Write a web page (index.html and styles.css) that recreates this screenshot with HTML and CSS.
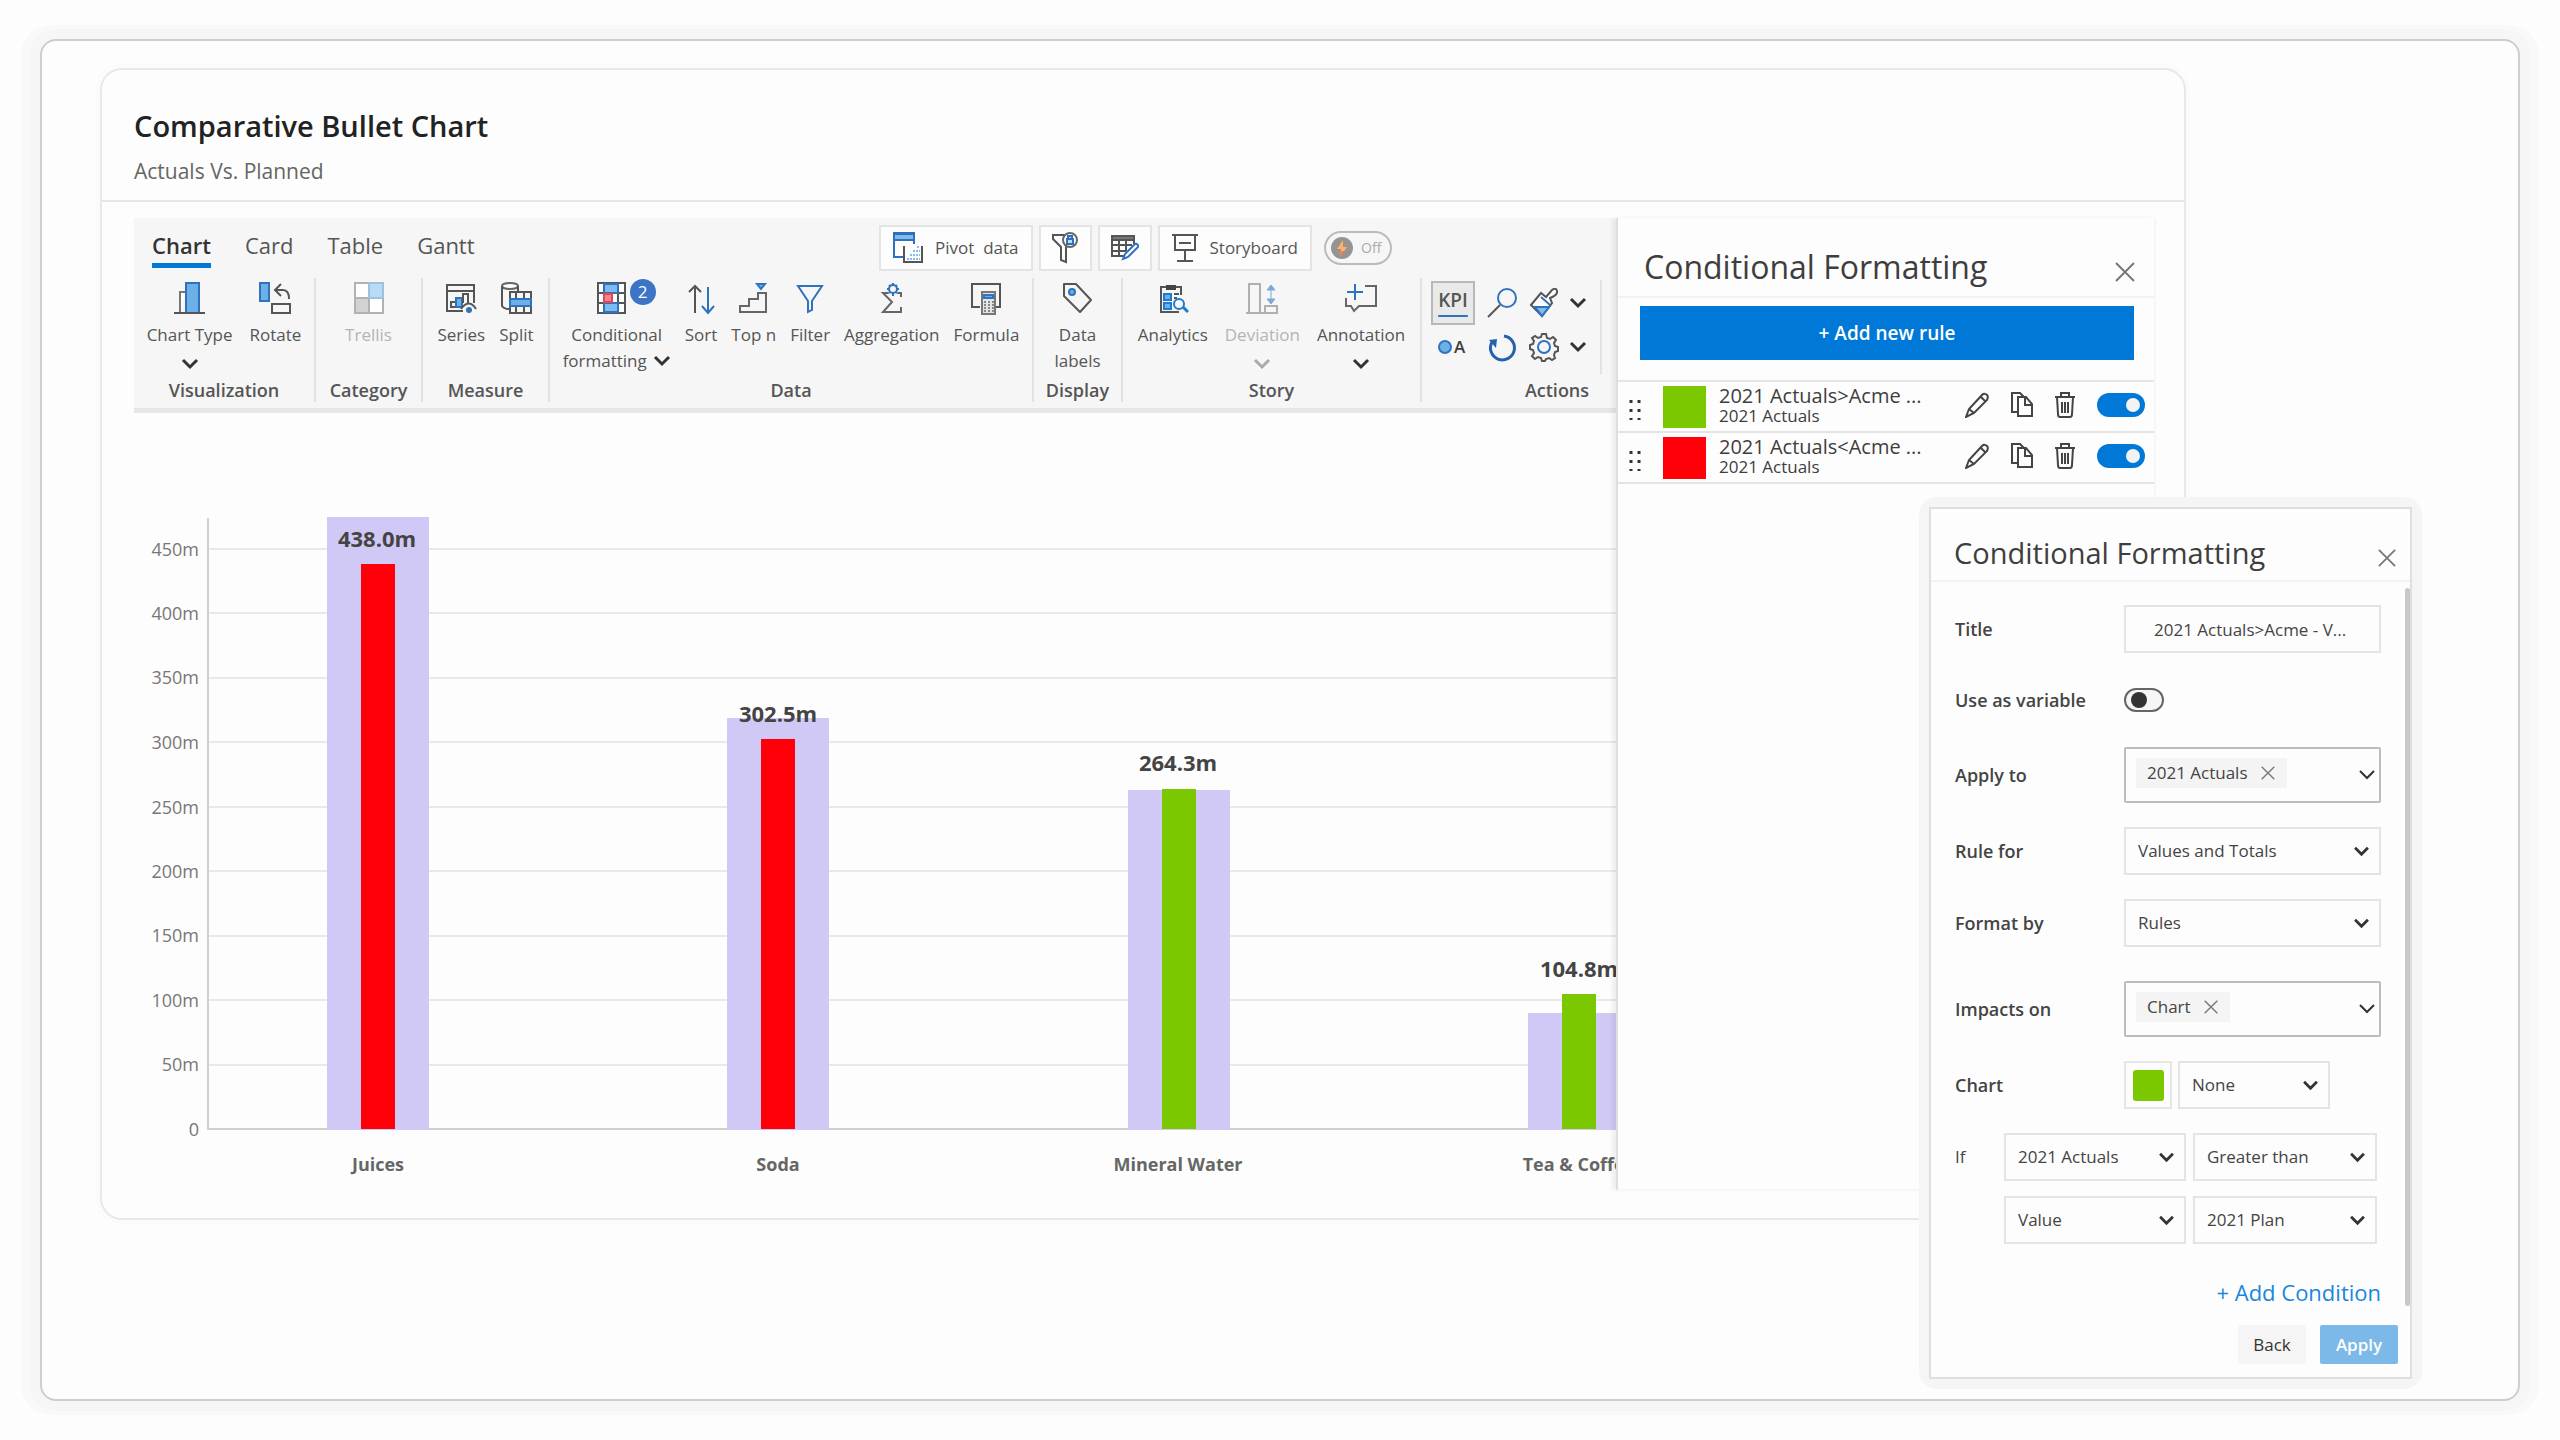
FILE: index.html
```html
<!DOCTYPE html>
<html lang="en">
<head>
<meta charset="utf-8">
<title>Comparative Bullet Chart</title>
<meta name="viewport" content="width=device-width, initial-scale=1">
<link rel="stylesheet" href="styles.css">
</head>
<body>
<svg class="defs" aria-hidden="true">
  <symbol id="chevron" viewBox="0 0 18 12"><path d="M2 2l7 7 7-7" fill="none" stroke="currentColor" stroke-width="3"/></symbol>
  <symbol id="close" viewBox="0 0 20 20"><path d="M1 1l18 18M19 1L1 19" fill="none" stroke="currentColor" stroke-width="2"/></symbol>
  <symbol id="pencil" viewBox="0 0 24 26"><path d="M1 25l3-8L17 3c2-2 4-1 5 0s1 3 0 5L9 21zM16 5l4 4M4 17l5 4" fill="none" stroke="currentColor" stroke-width="2"/></symbol>
  <symbol id="copy" viewBox="0 0 22 26"><path d="M7 20H1V1h8l4 4M7 5h8l6 7v12H7zM14 5v8h7" fill="none" stroke="currentColor" stroke-width="2"/></symbol>
  <symbol id="trash" viewBox="0 0 20 26"><path d="M0 5h20M6 5V1h8v4M2 5l1 17c0 2 1 3 2 3h10c1 0 2-1 2-3l1-17M7 10v11M10 10v11M13 10v11" fill="none" stroke="currentColor" stroke-width="2"/></symbol>
</svg>
<main class="frame">
  <section class="card">
    <header class="card-header">
      <h1>Comparative Bullet Chart</h1>
      <p>Actuals Vs. Planned</p>
    </header>
    <div class="visual">
      <div class="report">
        <div class="ribbon">
          <div class="ribbon-top">
            <nav class="tabs">
              <button class="tab active">Chart</button>
              <button class="tab">Card</button>
              <button class="tab">Table</button>
              <button class="tab">Gantt</button>
            </nav>
            <div class="quick">
              <button class="box wide">
                <svg width="30" height="32" viewBox="0 0 30 32"><path d="M10 25H1V1h20v11" fill="none" stroke="#2f6fbe" stroke-width="2"/><path d="M1 2h20v6H1z" fill="#7fbcec" stroke="#2f6fbe" stroke-width="2"/><path d="M11 14v16h18V14" fill="none" stroke="#555" stroke-width="2"/><path d="M14 27h13M17 23h10M20 19h7M24 15h3" stroke="#7fc0ee" stroke-width="2" stroke-dasharray="2 1"/></svg>
                <span>Pivot &nbsp;data</span>
              </button>
              <button class="box" aria-label="Filter lock">
                <svg width="27" height="32" viewBox="0 0 27 32"><path d="M13 3H1v4l8 8v13l5 2V15l3-2" fill="none" stroke="#555" stroke-width="2"/><circle cx="18" cy="8" r="7" fill="#fff" stroke="#666" stroke-width="2"/><path d="M15 7h6v5h-6zM16 7V4h4v3" fill="#bcdcf7" stroke="#2f6fbe" stroke-width="2"/></svg>
              </button>
              <button class="box" aria-label="Edit table">
                <svg width="28" height="28" viewBox="0 0 28 28"><path d="M1 2h22v4H1z" fill="#777" stroke="#555" stroke-width="2"/><path d="M1 2v20h12M1 11h20M1 17h14M8 6v16M15 6v11M23 6v4" fill="none" stroke="#555" stroke-width="2"/><path d="M12 25l2-5 10-10c1-1 4 1 3 3L17 23z" fill="#fff" stroke="#2f6fbe" stroke-width="2"/></svg>
              </button>
              <button class="box wide">
                <svg class="raise" width="26" height="30" viewBox="0 0 26 30"><path d="M0 2h26M3 2v15h20V2M7 10h12M13 17v11M5 28h16" fill="none" stroke="#555" stroke-width="2"/></svg>
                <span>Storyboard</span>
              </button>
              <button class="power" aria-pressed="false">
                <svg width="22" height="22" viewBox="0 0 22 22"><circle cx="11" cy="11" r="11" fill="#969492"/><path d="M12 3l-6 9h4l-1 8 7-10h-4z" fill="#fdb462"/><path d="M9 20l1-6h4z" fill="#f27b4d"/></svg>
                <span>Off</span>
              </button>
            </div>
          </div>
          <div class="groups">
            <section class="group g-visualization">
              <div class="tools">
                <button class="tool"><svg class="ico" viewBox="0 0 32 34"><path d="M6 32V11h6" fill="#fff" stroke="#777" stroke-width="2"/><path d="M12 2h13v30H12z" fill="#6cb0e8" stroke="#2f72bd" stroke-width="2"/><path d="M0 32h31" stroke="#555" stroke-width="2"/></svg><span>Chart Type</span><svg class="chev"><use href="#chevron"/></svg></button>
                <button class="tool"><svg class="ico" viewBox="0 0 32 34"><path d="M1 2h9v18H1z" fill="#6cb0e8" stroke="#2f72bd" stroke-width="2"/><path d="M13 23h18v9H13zM22 3l-6 6 6 6M16 9h8q6 0 6 9" fill="none" stroke="#555" stroke-width="2"/></svg><span>Rotate</span></button>
              </div>
              <h2>Visualization</h2>
            </section>
            <section class="group g-category">
              <div class="tools">
                <button class="tool" disabled><svg class="ico" viewBox="0 0 32 34"><path d="M2 2h28v30H2z" fill="#fff"/><path d="M16 2h14v15H16z" fill="#b9dbf5"/><path d="M2 17h14v15H2z" fill="#d2d2d2"/><path d="M2 2h28v30H2zM2 17h28M16 2v30" fill="none" stroke="#b2b2b2" stroke-width="2"/><path d="M16 2h14v15H16z" fill="none" stroke="#9fc1de" stroke-width="2"/></svg><span>Trellis</span></button>
              </div>
              <h2>Category</h2>
            </section>
            <section class="group g-measure">
              <div class="tools">
                <button class="tool"><svg class="ico" viewBox="0 0 32 34"><path d="M18 30H2V4h27v18M2 10h27M6 26v-5h5v5z" fill="none" stroke="#555" stroke-width="2"/><path d="M11 17h6v9h-6z" fill="#6cb0e8" stroke="#2f72bd" stroke-width="2"/><path d="M18 22v-9h5v9M16 28q8-11 15 0" fill="none" stroke="#555" stroke-width="2"/><circle cx="24" cy="29" r="3" fill="#2f72bd"/></svg><span>Series</span></button>
                <button class="tool"><svg class="ico" viewBox="0 0 32 34"><ellipse cx="10" cy="5" rx="8" ry="3" fill="#fff" stroke="#666" stroke-width="2"/><path d="M2 5v20q2 3 7 3M18 5v5M10 11h21v21H10zM16 11v21M24 11v21" fill="none" stroke="#555" stroke-width="2"/><path d="M10 18h21v7H10z" fill="#6cb0e8" stroke="#2f72bd" stroke-width="2"/></svg><span>Split</span></button>
              </div>
              <h2>Measure</h2>
            </section>
            <section class="group g-data">
              <div class="tools">
                <button class="tool"><span class="badged"><svg class="ico" viewBox="0 0 32 34"><path d="M2 2h27v30H2zM2 12h27M2 22h27M8 2v30M22 2v30" fill="#fff" stroke="#555" stroke-width="2"/><path d="M8 3h14v9H8zM8 22h14v9H8z" fill="#7cbcf0" stroke="#2f72bd" stroke-width="2"/><path d="M8 13h8v8H8z" fill="#f9838b" stroke="#ec4350" stroke-width="2"/></svg><b class="badge">2</b></span><span>Conditional</span><span class="line">formatting <svg class="chev"><use href="#chevron"/></svg></span></button>
                <button class="tool"><svg class="ico" viewBox="0 0 32 34"><path d="M10 32V5M4 11l6-6 6 6" fill="none" stroke="#555" stroke-width="2"/><path d="M23 6v26M17 25l6 7 6-7" fill="none" stroke="#2f72bd" stroke-width="2"/></svg><span>Sort</span></button>
                <button class="tool"><svg class="ico" viewBox="0 0 32 34"><path d="M2 31v-6h9v-7h9v-6h8v19z" fill="none" stroke="#666" stroke-width="2"/><path d="M19 3h8l-4 5z" fill="#6cb0e8" stroke="#2f72bd" stroke-width="2"/></svg><span>Top n</span></button>
                <button class="tool"><svg class="ico" viewBox="0 0 32 34"><path d="M4 5h24L18 20v9l-4 2V20z" fill="none" stroke="#2f72bd" stroke-width="2"/></svg><span>Filter</span></button>
                <button class="tool"><svg class="ico" viewBox="0 0 32 34"><path d="M25 16v-4H7l9 9-9 10h18v-5" fill="none" stroke="#666" stroke-width="2"/><circle cx="17" cy="8" r="6" fill="#f6f6f6"/><circle cx="17" cy="8" r="4" fill="none" stroke="#2f72bd" stroke-width="2"/><path d="M17 2v2M17 12v3M11 8h2M21 8h2M13 4l1 1M21 4l-1 1M13 12l1-1M21 12l-1-1" stroke="#2f72bd" stroke-width="2"/></svg><span>Aggregation</span></button>
                <button class="tool"><svg class="ico" viewBox="0 0 32 34"><path d="M10 26H2V3h28v23h-5" fill="none" stroke="#555" stroke-width="2"/><path d="M12 11h13v22H12z" fill="#e4e4e4" stroke="#777" stroke-width="2"/><path d="M14 14h9v3h-9z" fill="#6cb0e8" stroke="#2f72bd" stroke-width="2"/><path d="M15 20v11M19 20v11M23 20v11" stroke="#888" stroke-width="2" stroke-dasharray="2 1"/></svg><span>Formula</span></button>
              </div>
              <h2>Data</h2>
            </section>
            <section class="group g-display">
              <div class="tools">
                <button class="tool"><svg class="ico" viewBox="0 0 32 34"><path d="M3 3h12l15 16-11 12L3 15z" fill="none" stroke="#555" stroke-width="2" stroke-linejoin="round"/><circle cx="11" cy="11" r="3" fill="#6cb0e8" stroke="#2f72bd" stroke-width="2"/></svg><span>Data</span><span>labels</span></button>
              </div>
              <h2>Display</h2>
            </section>
            <section class="group g-story">
              <div class="tools">
                <button class="tool"><svg class="ico" viewBox="0 0 32 34"><path d="M24 14V6H4v25h18" fill="none" stroke="#555" stroke-width="2"/><path d="M9 4h10v5H9z" fill="#444"/><path d="M7 13h7v6H7zM7 22h7v6H7z" fill="#6cb0e8" stroke="#1d7cd0" stroke-width="2"/><path d="M17 13h5M17 17h3" stroke="#555" stroke-width="2"/><circle cx="22" cy="23" r="5" fill="#f6f6f6" stroke="#1d7cd0" stroke-width="2"/><path d="M26 26l5 5" stroke="#1d7cd0" stroke-width="3"/></svg><span>Analytics</span></button>
                <button class="tool" disabled><svg class="ico" viewBox="0 0 32 34"><path d="M3 32V3h11v29M19 25h12v7H19zM0 32h31" fill="none" stroke="#b0b0b0" stroke-width="2"/><path d="M25 6v14M21 9l4-5 4 5zM21 18l4 5 4-5z" fill="#7fa9d6" stroke="#7fa9d6"/></svg><span>Deviation</span><svg class="chev"><use href="#chevron"/></svg></button>
                <button class="tool"><svg class="ico" viewBox="0 0 32 34"><path d="M20 5h11v20H14l-5 5-3-5H1v-8" fill="none" stroke="#666" stroke-width="2"/><path d="M10 3v16M2 11h16" stroke="#2f72bd" stroke-width="2"/></svg><span>Annotation</span><svg class="chev"><use href="#chevron"/></svg></button>
              </div>
              <h2>Story</h2>
            </section>
            <section class="group g-actions">
              <div class="actions">
                <button class="kpi">KPI</button>
                <button class="action" aria-label="Search"><svg width="30" height="30" viewBox="0 0 30 30"><circle cx="20" cy="10" r="9" fill="none" stroke="#2f72bd" stroke-width="2"/><path d="M13 17L1 29" stroke="#555" stroke-width="2"/></svg></button>
                <button class="action" aria-label="Format painter"><svg width="30" height="30" viewBox="0 0 30 30"><path d="M2 17l10-12 5 4 6-7q4-3 5 1t-7 7l2 5-10 13z" fill="#fff" stroke="#555" stroke-width="2"/><path d="M6 19h14l-7 9z" fill="#7cbcf0" stroke="#2f72bd" stroke-width="2"/><path d="M12 9l9 8" stroke="#2f72bd" stroke-width="2"/></svg><svg class="chev"><use href="#chevron"/></svg></button>
                <button class="action label-toggle" aria-label="Data point labels"><svg width="14" height="14" viewBox="0 0 14 14"><circle cx="7" cy="7" r="6" fill="#6cb0e8" stroke="#2f72bd" stroke-width="2"/></svg>A</button>
                <button class="action" aria-label="Reset"><svg width="30" height="30" viewBox="0 0 30 30"><path d="M17 4A12 12 0 1 1 5 10" fill="none" stroke="#2462ad" stroke-width="3"/><path d="M2 8l8-1-1 9z" fill="#2462ad"/></svg></button>
                <button class="action" aria-label="Settings"><svg width="30" height="30" viewBox="0 0 30 30"><path d="M13 2h4l1 4 3 1 3-2 3 3-2 3 1 3 3 1v4l-3 1-1 3 1 3-3 2-3-2-3 1-1 2h-3l-1-3-3-1-3 2-3-3 2-3-1-3-3-1v-4l3-1 1-3-2-3 3-2 3 2 3-1z" fill="none" stroke="#555" stroke-width="2"/><circle cx="15" cy="15" r="6" fill="none" stroke="#2f72bd" stroke-width="2"/></svg><svg class="chev"><use href="#chevron"/></svg></button>
              </div>
              <div class="more">
                <svg width="28" height="28" viewBox="0 0 28 28"><path d="M1 12L12 2M1 12l10 9" stroke="#3c74c0" stroke-width="2"/></svg>
                <svg width="28" height="28" viewBox="0 0 28 28"><path d="M1 6h22v14H1z" fill="#b5653a" stroke="#555" stroke-width="2"/></svg>
              </div>
              <h2>Actions</h2>
            </section>
          </div>
        </div>
        <svg class="chart" viewBox="0 0 1482 781" preserveAspectRatio="xMinYMin slice" role="img" aria-label="Actuals against plan by category">
          <path class="grid" d="M74 656h1410M74 591h1410M74 527h1410M74 462h1410M74 398h1410M74 333h1410M74 269h1410M74 204h1410M74 140h1410"/>
          <path class="axis" d="M74 109v611h1410"/>
          <g class="ticks"><text x="65" y="147">450m</text><text x="65" y="211">400m</text><text x="65" y="275">350m</text><text x="65" y="340">300m</text><text x="65" y="405">250m</text><text x="65" y="469">200m</text><text x="65" y="533">150m</text><text x="65" y="598">100m</text><text x="65" y="662">50m</text><text x="65" y="727">0</text></g>
          <g class="plan"><rect x="193" y="108" width="102" height="613"/><rect x="593" y="309" width="102" height="412"/><rect x="994" y="381" width="102" height="340"/><rect x="1394" y="604" width="102" height="117"/></g>
          <g class="below"><rect x="227" y="155" width="34" height="565"/><rect x="627" y="330" width="34" height="390"/></g>
          <g class="above"><rect x="1028" y="380" width="34" height="340"/><rect x="1428" y="585" width="34" height="135"/></g>
          <g class="values"><text x="243" y="138">438.0m</text><text x="644" y="313">302.5m</text><text x="1044" y="362">264.3m</text><text x="1445" y="568">104.8m</text></g>
          <g class="cats"><text x="244" y="762">Juices</text><text x="644" y="762">Soda</text><text x="1044" y="762">Mineral Water</text><text x="1445" y="762">Tea &amp; Coffee</text></g>
        </svg>
      </div>
      <aside class="panel">
        <header class="panel-head"><h2>Conditional Formatting</h2><button class="x" aria-label="Close panel"><svg width="20" height="20"><use href="#close"/></svg></button></header>
        <button class="add-rule">+ Add new rule</button>
        <ul class="rules">
          <li class="rule">
            <svg class="grip" width="12" height="22" viewBox="0 0 12 22"><path d="M2 1v20M10 1v20" stroke="#333" stroke-width="3" stroke-dasharray="3 6"/></svg>
            <span class="swatch green"></span>
            <div class="rule-text"><strong>2021 Actuals&gt;Acme ...</strong><span>2021 Actuals</span></div>
            <button class="act" aria-label="Edit"><svg width="24" height="26"><use href="#pencil"/></svg></button>
            <button class="act" aria-label="Duplicate"><svg width="22" height="26"><use href="#copy"/></svg></button>
            <button class="act" aria-label="Delete"><svg width="20" height="26"><use href="#trash"/></svg></button>
            <input class="switch" type="checkbox" role="switch" checked aria-label="Enable greater-than rule">
          </li>
          <li class="rule">
            <svg class="grip" width="12" height="22" viewBox="0 0 12 22"><path d="M2 1v20M10 1v20" stroke="#333" stroke-width="3" stroke-dasharray="3 6"/></svg>
            <span class="swatch red"></span>
            <div class="rule-text"><strong>2021 Actuals&lt;Acme ...</strong><span>2021 Actuals</span></div>
            <button class="act" aria-label="Edit"><svg width="24" height="26"><use href="#pencil"/></svg></button>
            <button class="act" aria-label="Duplicate"><svg width="22" height="26"><use href="#copy"/></svg></button>
            <button class="act" aria-label="Delete"><svg width="20" height="26"><use href="#trash"/></svg></button>
            <input class="switch" type="checkbox" role="switch" checked aria-label="Enable less-than rule">
          </li>
        </ul>
      </aside>
    </div>
  </section>

  <div class="dialog-halo">
  <form class="dialog" aria-labelledby="dialog-title">
    <header class="dialog-head"><h2 id="dialog-title">Conditional Formatting</h2><button type="button" class="x" aria-label="Close dialog"><svg width="18" height="18"><use href="#close"/></svg></button></header>
    <div class="fields">
      <div class="row"><label for="title">Title</label><input class="text" id="title" type="text" value="2021 Actuals&gt;Acme - V..."></div>
      <div class="row switch-row"><label for="variable">Use as variable</label><input class="mini" id="variable" type="checkbox" role="switch"></div>
      <div class="row"><span class="name">Apply to</span><div class="multi"><span class="chip">2021 Actuals<button type="button" aria-label="Remove 2021 Actuals"><svg width="14" height="14"><use href="#close"/></svg></button></span><svg class="thin" viewBox="0 0 16 12"><path d="M1 2l7 7 7-7" fill="none" stroke="currentColor" stroke-width="2"/></svg></div></div>
      <div class="row"><label for="rule-for">Rule for</label><div class="pick"><select id="rule-for"><option>Values and Totals</option></select><svg class="chev"><use href="#chevron"/></svg></div></div>
      <div class="row"><label for="format-by">Format by</label><div class="pick"><select id="format-by"><option>Rules</option></select><svg class="chev"><use href="#chevron"/></svg></div></div>
      <div class="row spaced"><span class="name">Impacts on</span><div class="multi"><span class="chip">Chart<button type="button" aria-label="Remove Chart"><svg width="14" height="14"><use href="#close"/></svg></button></span><svg class="thin" viewBox="0 0 16 12"><path d="M1 2l7 7 7-7" fill="none" stroke="currentColor" stroke-width="2"/></svg></div></div>
      <div class="row"><label for="pattern">Chart</label><div class="color-row"><button type="button" class="color" aria-label="Chart colour"><span></span></button><div class="pick"><select id="pattern"><option>None</option></select><svg class="chev"><use href="#chevron"/></svg></div></div></div>
      <div class="condition">
        <span class="name">If</span>
        <div class="pick"><select aria-label="Measure"><option>2021 Actuals</option></select><svg class="chev"><use href="#chevron"/></svg></div>
        <div class="pick"><select aria-label="Operator"><option>Greater than</option></select><svg class="chev"><use href="#chevron"/></svg></div>
        <div class="pick second"><select aria-label="Compare with"><option>Value</option></select><svg class="chev"><use href="#chevron"/></svg></div>
        <div class="pick"><select aria-label="Target"><option>2021 Plan</option></select><svg class="chev"><use href="#chevron"/></svg></div>
      </div>
      <a class="add-condition" href="#">+ Add Condition</a>
      <span class="scroll"></span>
    </div>
    <footer class="dialog-foot"><button type="button" class="back">Back</button><button type="button" class="apply">Apply</button></footer>
  </form>
  </div>
</main>
</body>
</html>
```
FILE: styles.css
```css
* { box-sizing: border-box; }
body {
  margin: 0;
  min-height: 100vh;
  padding: 39px 40px;
  display: flex;
  background: #fdfdfd;
  color: #3f3e3d;
  font: 17px/26px "Open Sans", "Noto Sans", sans-serif;
}
h1, h2, p, ul { margin: 0; padding: 0; font-weight: 400; }
ul { list-style: none; }
button { margin: 0; padding: 0; border: 0; background: none; font: inherit; color: inherit; }
input, select { margin: 0; font: inherit; color: inherit; }
svg { display: block; flex: none; }
.defs { position: absolute; width: 0; height: 0; }
.chev { width: 18px; height: 12px; color: #333; }

.frame {
  position: relative;
  flex: 1;
  min-width: 0;
  padding: 27px 332px 60px 58px;
  border: 2px solid #cecece;
  border-radius: 16px;
  box-shadow: 0 0 0 10px #f6f6f6, -5px 0 0 14px #f9f9f9, 5px 0 0 14px #f9f9f9;
  background: #fdfdfd;
}
.card {
  border: 2px solid #e8e8e8;
  border-radius: 22px;
  box-shadow: 0 0 0 4px #fbfbf9;
  padding-bottom: 28px;
}
.card-header { height: 132px; padding: 36px 32px 0; border-bottom: 2px solid #e6e6e6; }
.card-header h1 { font-size: 29px; line-height: 40px; font-weight: 600; color: #222; }
.card-header p { font-size: 21px; line-height: 30px; margin-top: 10px; color: #666; }
.visual { display: flex; margin: 16px 28px 0 32px; }
.report { flex: 1; min-width: 0; overflow: hidden; }

.ribbon { background: #f6f6f6; height: 191px; border-bottom: 1px solid #e4e4e4; box-shadow: 0 4px 0 #e7e7e8; overflow: hidden; margin-bottom: 4px; }
.ribbon-top { height: 60px; display: flex; justify-content: space-between; padding: 0 224px 0 18px; }
.tabs { display: flex; gap: 34px; padding-top: 10px; }
.tab { height: 40px; font-size: 22px; line-height: 34px; padding-bottom: 1px; border-bottom: 5px solid transparent; color: #555; }
.tab.active { font-weight: 600; color: #333; border-color: #0078d7; }
.quick { display: flex; align-items: center; gap: 6px; }
.box { height: 46px; display: flex; align-items: center; gap: 12px; padding: 0 11px; border: 2px solid #e4e4e4; background: #fdfdfd; color: #555; white-space: nowrap; }
.wide { padding: 0 12px; }
.raise { align-self: flex-start; margin-top: 6px; }
.power { width: 68px; height: 34px; margin-left: 6px; display: flex; align-items: center; gap: 8px; padding-left: 5px; border: 2px solid #bbb; border-radius: 17px; color: #aaa; font-size: 14px; }
.groups { display: flex; height: 124px; }
.group { flex: none; display: flex; flex-direction: column; border-right: 2px solid #e2e2e2; }
.group h2 { font-size: 18px; line-height: 24px; font-weight: 600; text-align: center; color: #555; }
.g-visualization { width: 182px; }
.g-category { width: 107px; }
.g-measure { width: 127px; }
.g-data { width: 484px; }
.g-display { width: 89px; }
.g-story { width: 299px; }
.g-actions { width: 272px; position: relative; }
.tools { height: 100px; padding-top: 3px; display: flex; justify-content: center; gap: 14px; }
.g-visualization .tools, .g-story .tools { gap: 17px; }
.tool { display: flex; flex-direction: column; align-items: center; height: 94px; white-space: nowrap; color: #555; }
.tool:disabled { color: #b4b4b4; }
.tool:disabled .chev { color: #aaa; }
.ico { width: 32px; height: 34px; margin-bottom: 7px; }
.tool > .chev { margin-top: 10px; }
.line { display: flex; align-items: center; gap: 6px; }
.badged { position: relative; padding-right: 10px; }
.badge { position: absolute; left: 34px; top: -2px; width: 26px; height: 26px; border-radius: 13px; background: #3c74c6; color: #fff; font-size: 17px; line-height: 26px; font-weight: 400; }
.actions { height: 100px; display: grid; grid-template-columns: 44px 30px 58px; grid-template-rows: 44px 44px; column-gap: 12px; padding: 3px 0 0 9px; }
.kpi { border: 2px solid #b8b8b8; background: #e9e9e9; font-size: 19px; line-height: 26px; font-weight: 600; text-decoration: underline 2px #2f72bd; text-underline-offset: 8px; padding-bottom: 6px; color: #555; }
.action { display: flex; align-items: center; gap: 10px; }
.label-toggle { gap: 2px; padding-left: 7px; font-weight: 600; }
.more { position: absolute; left: 178px; top: 2px; height: 94px; padding: 12px 0 0 14px; border-left: 2px solid #e2e2e2; display: grid; gap: 20px; align-content: start; }

.chart { width: 100%; height: 781px; margin-top: -4px; }
.chart text { font-family: "Open Sans", "Noto Sans", sans-serif; }
.grid { stroke: #e9e9e9; stroke-width: 2; }
.axis { stroke: #cfcfcf; stroke-width: 2; fill: none; }
.ticks { font-size: 18px; text-anchor: end; fill: #777; }
.plan { fill: #d1c9f5; }
.below { fill: #ff0009; }
.above { fill: #7bc800; }
.values { font-size: 22px; font-weight: 700; text-anchor: middle; fill: #444; }
.cats { font-size: 18px; font-weight: 700; text-anchor: middle; fill: #666; }

.panel { position: relative; flex: 0 0 540px; border-left: 2px solid #dedede; border-right: 2px solid #f6f6f6; border-bottom: 1px solid #f7f7f7; box-shadow: -4px 0 4px rgba(0, 0, 0, .06); background: #fdfdfd; }
.panel-head { display: flex; align-items: center; justify-content: space-between; height: 80px; padding: 20px 19px 0 26px; border-bottom: 2px solid #f3f3f3; }
.panel-head h2 { font-size: 32px; line-height: 40px; }
.x { color: #777; padding-top: 10px; }
.add-rule { display: block; width: calc(100% - 42px); height: 54px; margin: 8px 20px 20px 22px; background: #0078d7; color: #fff; font-size: 19px; font-weight: 600; }
.rules { border-top: 2px solid #e6e6e6; }
.rule { display: flex; align-items: center; height: 51px; padding: 0 9px 0 11px; border-bottom: 2px solid #e4e4e4; }
.grip { margin: 6px 22px 0 0; }
.swatch { width: 43px; height: 42px; margin-right: 13px; }
.green { background: #7bc800; }
.red { background: #ff0009; }
.rule-text { flex: 1; display: flex; flex-direction: column; font-weight: 500; font-size: 17px; line-height: 19px; padding-bottom: 2px; white-space: nowrap; }
.rule-text strong { font-size: 20px; font-weight: 500; line-height: 20px; }
.act { margin-right: 22px; padding-bottom: 4px; color: #444; }
.switch { appearance: none; width: 48px; height: 24px; border-radius: 12px; background: #0078d7; display: flex; justify-content: flex-end; padding: 5px; margin-bottom: 4px; }
.switch::before { content: ""; width: 14px; height: 14px; border-radius: 7px; background: #f3f3f3; }

.dialog-halo { position: absolute; right: 96px; top: 456px; width: 503px; padding: 10px; border-radius: 18px; background: #f5f5f5; }
.dialog { border: 2px solid #dfdfdf; background: #fdfdfd; }
.dialog-head { display: flex; align-items: center; justify-content: space-between; height: 73px; padding: 16px 14px 0 23px; border-bottom: 2px solid #f3f3f3; }
.dialog-head h2 { font-size: 29px; line-height: 40px; }
.fields { position: relative; display: flex; flex-direction: column; gap: 24px; padding: 23px 29px 17px 24px; color: #444; }
.row { display: grid; grid-template-columns: 169px 1fr; align-items: center; }
.row label, .row .name { font-size: 18px; font-weight: 600; }
.switch-row { height: 46px; }
.spaced { margin-top: 10px; }
.text { width: 100%; height: 48px; border: 2px solid #e4e4e4; background: #fdfdfd; padding: 0 0 0 28px; }
.mini { appearance: none; width: 40px; height: 24px; border: 2px solid #666; border-radius: 12px; background: #f6f6f6; padding: 2px 5px; display: flex; }
.mini::before { content: ""; width: 16px; height: 16px; border-radius: 8px; background: #333; }
.multi { height: 56px; border: 2px solid #bdbdbd; border-radius: 2px; display: flex; justify-content: space-between; align-items: center; padding: 0 4px 4px 10px; }
.chip { height: 30px; display: flex; align-items: center; gap: 13px; padding: 0 12px 0 11px; background: #f4f4f4; }
.chip button { color: #777; }
.thin { width: 16px; height: 12px; margin-top: 4px; color: #333; }
.pick { display: grid; align-items: center; }
.pick > * { grid-area: 1 / 1; }
.pick select { appearance: none; width: 100%; height: 48px; border: 2px solid #e4e4e4; border-radius: 0; background: #fdfdfd; padding: 0 32px 0 12px; }
.pick .chev { justify-self: end; margin-right: 11px; width: 17px; height: 11px; pointer-events: none; }
.color-row { display: grid; grid-template-columns: 48px 152px; gap: 6px; }
.color { height: 48px; border: 2px solid #e6e6e6; display: grid; place-items: center; }
.color span { width: 31px; height: 31px; border-radius: 3px; background: #7bc800; }
.condition { display: grid; grid-template-columns: 42px 182px 184px; gap: 15px 7px; align-items: center; }
.second { grid-column: 2; }
.add-condition { align-self: flex-end; margin-top: 8px; font-size: 22px; line-height: 32px; color: #1a86dc; text-decoration: none; }
.scroll { position: absolute; right: 0; top: 6px; bottom: 19px; width: 5px; border-radius: 3px; background: #c8c8c8; }
.dialog-foot { display: flex; justify-content: flex-end; gap: 14px; padding: 0 12px 13px; }
.back, .apply { height: 39px; border-radius: 2px; }
.back { width: 68px; background: #f5f5f5; color: #333; }
.apply { width: 78px; background: #7db9e8; color: #fff; font-weight: 600; }
```
